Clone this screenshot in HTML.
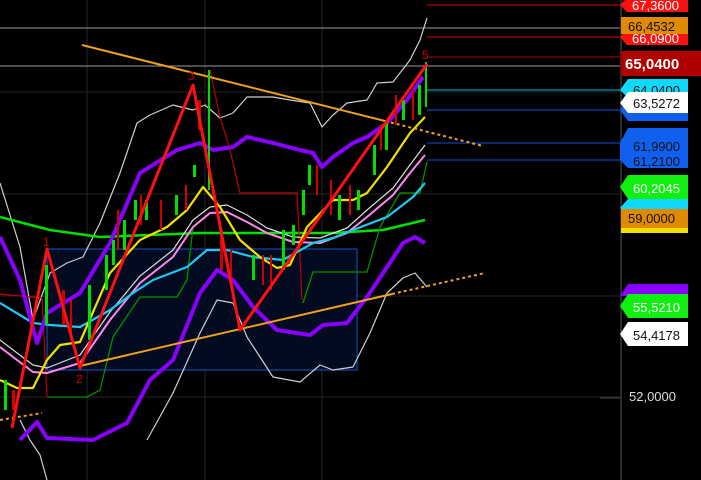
<!DOCTYPE html>
<html><head><style>
html,body{margin:0;padding:0;background:#000;}
svg{display:block;}
text{font-family:"Liberation Sans",sans-serif;}
</style></head><body>
<svg width="701" height="480" viewBox="0 0 701 480" xmlns="http://www.w3.org/2000/svg">
<rect width="701" height="480" fill="#000"/>
<!-- grid -->
<g stroke="#262626" stroke-width="1">
<line x1="87" y1="0" x2="87" y2="480"/><line x1="205" y1="0" x2="205" y2="480"/><line x1="322" y1="0" x2="322" y2="480"/>
<line x1="0" y1="92" x2="620" y2="92"/><line x1="0" y1="194" x2="620" y2="194"/><line x1="0" y1="296" x2="620" y2="296"/><line x1="0" y1="397" x2="620" y2="397"/>
</g>
<line x1="0" y1="28" x2="620" y2="28" stroke="#9a9a9a"/>
<line x1="0" y1="66" x2="620" y2="66" stroke="#9a9a9a"/>
<line x1="621" y1="0" x2="621" y2="480" stroke="#555"/>
<!-- price level lines -->
<line x1="427" y1="5" x2="620" y2="5" stroke="#e00000"/>
<line x1="427" y1="37" x2="620" y2="37" stroke="#e00000"/>
<line x1="427" y1="57" x2="620" y2="57" stroke="#b00000"/>
<line x1="427" y1="90" x2="620" y2="90" stroke="#00b8e0"/>
<line x1="427" y1="110" x2="620" y2="110" stroke="#1050e0"/>
<line x1="427" y1="143" x2="620" y2="143" stroke="#1050e0"/>
<line x1="427" y1="160" x2="620" y2="160" stroke="#1050e0"/>
<!-- rectangle -->
<rect x="47" y="249" width="310" height="121" fill="#020b20" stroke="#1a55d0" stroke-width="1"/>
<!-- lines -->
<g fill="none" stroke-linejoin="round">
<polyline stroke="#d0d0d0" stroke-width="1.2" points="0,183 20,247 33,320 50,273 67,263 83,257 100,223 120,173 137,123 150,115 173,105 193,110 205,105 220,118 233,113 247,97 273,97 290,100 310,103 322,127 333,115 347,103 367,100 377,83 393,82 410,60 420,40 427,18"/>
<polyline stroke="#d0d0d0" stroke-width="1.2" points="20,420 30,440 40,455 47,480"/>
<polyline stroke="#d0d0d0" stroke-width="1.2" points="147,440 173,393 200,333 217,300 233,303 247,337 273,377 300,382 320,365 333,370 353,367 370,333 387,293 403,278 415,273 427,287"/>
<polyline stroke="#00e000" stroke-width="2.5" points="0,217 50,230 100,237 200,233 267,233 333,233 383,230 425,220"/>
<polyline stroke="#009000" stroke-width="1.3" points="47,397 87,397 100,390 113,337 140,297 177,297 187,280 193,227"/>
<polyline stroke="#009000" stroke-width="1.3" points="303,303 313,272 367,272 380,227 400,193 420,193 427,162"/>
<polyline stroke="#c00000" stroke-width="1.2" points="0,294 42,298 47,397"/>
<polyline stroke="#c00000" stroke-width="1.2" points="210,70 220,117 230,150 240,193 297,193 302,300"/>
<polyline stroke="#dddddd" stroke-width="1.2" points="0,340 33,365 47,368 80,355 110,312 140,276 173,250 193,220 210,207 227,205 247,215 267,228 293,237 320,238 347,228 367,210 393,188 410,165 425,145"/>
<polyline stroke="#ff88ee" stroke-width="2" points="0,347 17,360 33,372 47,373 80,363 110,320 140,283 173,257 193,227 210,213 227,212 247,222 267,233 293,242 320,243 347,233 367,217 393,195 410,173 425,155"/>
<polyline stroke="#20c8f0" stroke-width="2.2" points="0,303 33,323 50,325 80,327 110,310 133,293 153,280 187,267 207,250 227,250 253,257 283,260 313,243 333,238 353,230 387,217 413,197 425,183"/>
<polyline stroke="#f0e000" stroke-width="2.2" points="0,380 17,388 33,388 47,360 60,345 80,342 110,273 140,240 167,227 187,210 203,187 220,207 240,240 260,257 277,268 290,265 307,227 333,200 353,200 367,193 387,167 410,133 425,117"/>
<polyline stroke="#8a00ff" stroke-width="4" points="0,237 20,280 37,343 47,313 80,293 110,243 140,173 177,150 200,143 213,150 233,147 247,137 273,143 300,150 313,153 322,167 333,157 353,143 367,137 387,123 407,100 423,77"/>
<polyline stroke="#8a00ff" stroke-width="4" points="20,440 37,422 47,438 93,440 127,423 150,380 173,360 200,293 217,270 233,280 253,307 277,330 310,335 323,325 347,323 367,297 383,273 403,243 415,237 425,243"/>
<line x1="82" y1="45" x2="385" y2="121" stroke="#f0a020" stroke-width="2"/>
<line x1="385" y1="121" x2="483" y2="146" stroke="#f0a020" stroke-width="2" stroke-dasharray="3,3"/>
<line x1="80" y1="366" x2="392" y2="294" stroke="#f0a020" stroke-width="2"/>
<line x1="392" y1="294" x2="485" y2="273" stroke="#f0a020" stroke-width="2" stroke-dasharray="3,3"/>
<line x1="0" y1="420" x2="42" y2="413" stroke="#f0a020" stroke-width="2" stroke-dasharray="3,3"/>
</g>
<!-- candles -->
<g fill="#00e000">
<rect x="4" y="380" width="3" height="30"/><rect x="45" y="265" width="3" height="60"/><rect x="88" y="285" width="3" height="55"/><rect x="105" y="255" width="3" height="35"/><rect x="112" y="240" width="3" height="25"/><rect x="123" y="220" width="3" height="30"/><rect x="134" y="200" width="3" height="20"/><rect x="145" y="200" width="3" height="20"/><rect x="175" y="195" width="3" height="20"/><rect x="193" y="165" width="3" height="12"/><rect x="208" y="70" width="2" height="120"/><rect x="252" y="255" width="3" height="25"/><rect x="282" y="230" width="3" height="40"/><rect x="292" y="225" width="3" height="20"/><rect x="302" y="190" width="3" height="25"/><rect x="308" y="165" width="3" height="20"/><rect x="338" y="195" width="3" height="25"/><rect x="357" y="190" width="3" height="20"/><rect x="373" y="145" width="3" height="30"/><rect x="385" y="120" width="3" height="30"/><rect x="402" y="100" width="3" height="20"/><rect x="418" y="85" width="3" height="30"/><rect x="425" y="62" width="2" height="45"/>
</g>
<g fill="#d00000">
<rect x="12" y="390" width="3" height="20"/><rect x="62" y="290" width="3" height="35"/><rect x="70" y="300" width="2" height="35"/><rect x="117" y="210" width="2" height="40"/><rect x="140" y="195" width="2" height="30"/><rect x="160" y="200" width="2" height="30"/><rect x="185" y="185" width="2" height="25"/><rect x="198" y="100" width="3" height="30"/><rect x="220" y="230" width="3" height="40"/><rect x="230" y="250" width="2" height="30"/><rect x="262" y="255" width="2" height="30"/><rect x="270" y="255" width="2" height="35"/><rect x="316" y="165" width="2" height="30"/><rect x="330" y="180" width="2" height="35"/><rect x="349" y="185" width="2" height="30"/><rect x="380" y="125" width="2" height="25"/><rect x="395" y="95" width="2" height="30"/><rect x="412" y="90" width="2" height="30"/>
</g>
<!-- zigzag -->
<polyline fill="none" stroke="#ff1010" stroke-width="3" stroke-linejoin="round" points="12,428 47,249 80,368 193,85 240,330 427,64"/>
<g fill="#d00000" font-size="12">
<text x="43" y="246">1</text><text x="76" y="383">2</text><text x="188" y="80">3</text><text x="422" y="59">5</text>
</g>
<!-- labels -->
<g font-size="13">
<polygon points="620,5 627,-2 688,-2 688,12 627,12" fill="#ff1010"/><text x="632" y="10" fill="#fff">67,3600</text>
<polygon points="620,37 627,30 688,30 688,45 627,45" fill="#ff1010"/><text x="632" y="43" fill="#fff">66,0900</text>
<rect x="621" y="17" width="67" height="17" fill="#e08a00"/><text x="628" y="31" fill="#111">66,4532</text>
<rect x="621" y="51" width="80" height="25" fill="#b00000"/><text x="625" y="69" fill="#fff" font-size="15" font-weight="bold">65,0400</text>
<polygon points="620,90 628,79 688,79 688,98 628,98" fill="#10d8f8"/><text x="633" y="95" fill="#111">64,0400</text>
<polygon points="620,110 628,100 688,100 688,121 628,121" fill="#1060f0"/>
<polygon points="620,103 628,92 688,92 688,113 628,113" fill="#fff"/><text x="633" y="108" fill="#111">63,5272</text>
<polygon points="620,143 628,128 688,128 688,168 628,168 620,160" fill="#1060f0"/><text x="633" y="151" fill="#111">61,9900</text><text x="633" y="166" fill="#111">61,2100</text>
<polygon points="620,187 628,175 688,175 688,199 628,199" fill="#10f010"/><text x="633" y="193" fill="#fff">60,2045</text>
<polygon points="620,208 628,199 688,199 688,215 628,215" fill="#10d8f8"/>
<rect x="621" y="227" width="67" height="6" fill="#f0e000"/>
<rect x="621" y="209" width="67" height="19" fill="#e08a00"/><text x="628" y="223" fill="#111">59,0000</text>
<polygon points="620,296 628,284 688,284 688,296" fill="#8a00ff"/>
<polygon points="620,306 628,294 688,294 688,318 628,318" fill="#10f010"/><text x="633" y="312" fill="#fff">55,5210</text>
<polygon points="620,334 628,322 688,322 688,346 628,346" fill="#fff"/><text x="633" y="340" fill="#111">54,4178</text>
<line x1="600" y1="398" x2="621" y2="398" stroke="#444"/>
<text x="629" y="401" fill="#ddd">52,0000</text>
</g>
</svg>
</body></html>
